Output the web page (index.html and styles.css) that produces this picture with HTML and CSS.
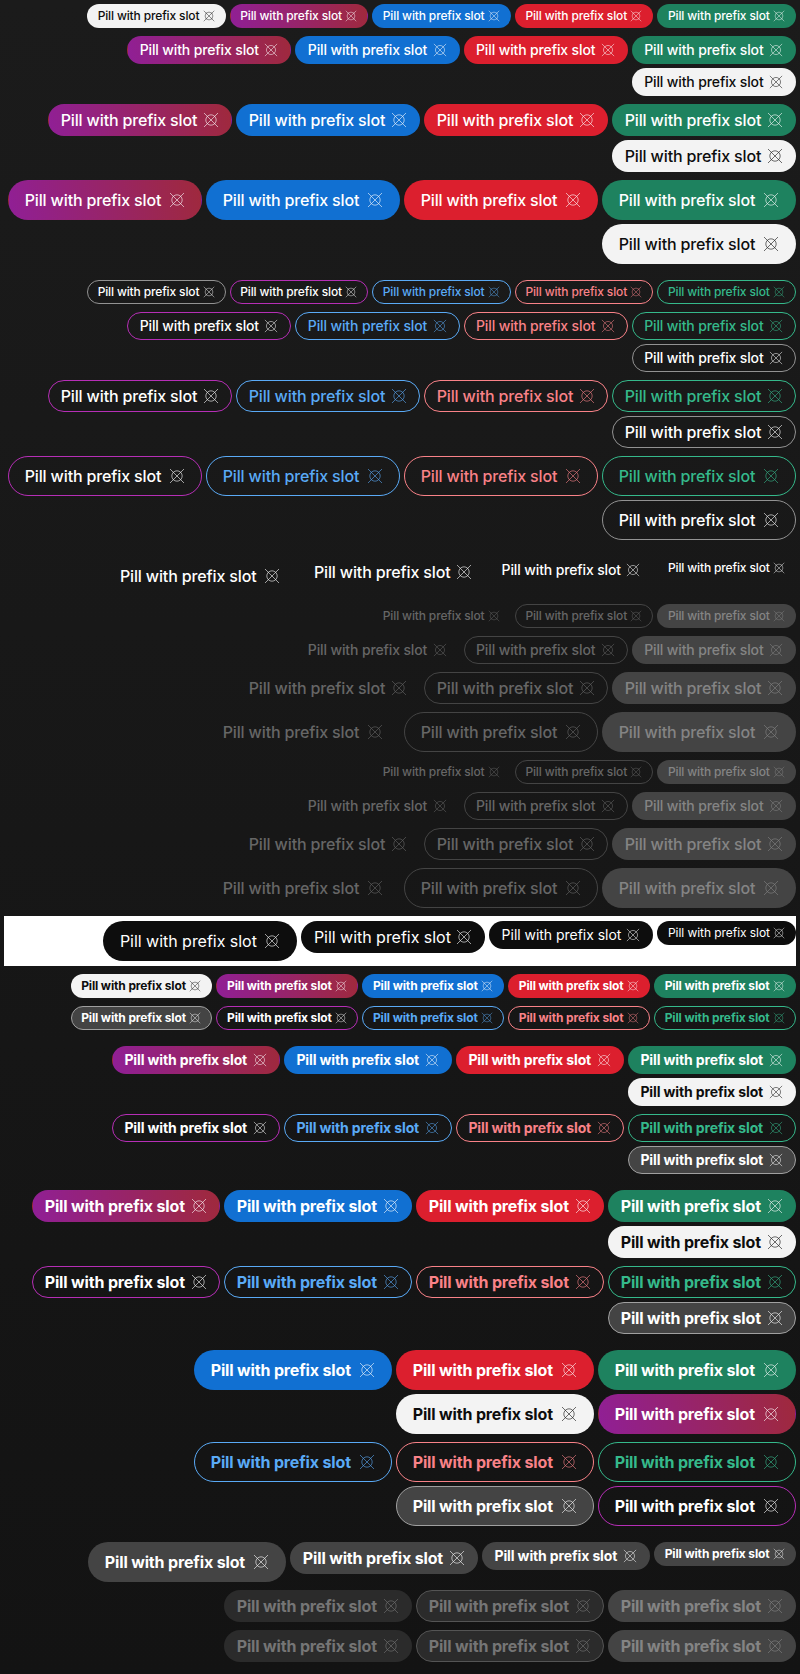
FILE: index.html
```html
<!DOCTYPE html>
<html lang="en">
<head>
<meta charset="utf-8">
<title>Pills</title>
<link rel="stylesheet" href="styles.css">
</head>
<body>
<svg class="defs" aria-hidden="true">
  <symbol id="slot-icon" viewBox="0 0 16 16">
    <circle cx="8" cy="8" r="5.2"/>
    <path d="M1 1 15 15M15 1 1 15"/>
  </symbol>
</svg>
<main class="board" id="board" dir="rtl"></main>
<script src="script.js"></script>
</body>
</html>
```

FILE: styles.css
```css
body {
  margin: 0;
  background: #131313;
  font-family: Inter, "Liberation Sans", sans-serif;
}

.defs {
  position: absolute;
  width: 0;
  height: 0;
}

.board {
  box-sizing: border-box;
  height: 1674px;
  background: linear-gradient(#1b1b1b, #131313);
}

.row {
  display: flex;
  flex-wrap: wrap;
  align-items: flex-start;
  gap: 4px;
  padding: 4px;
}

.row.spaced {
  padding-top: 12px;
}

.sheet {
  display: flex;
  flex: 1;
  align-items: flex-start;
  gap: 4px;
  padding: 5px 0;
  background: #fff;
}

.pill {
  direction: ltr;
  display: flex;
  align-items: center;
  justify-content: space-between;
  box-sizing: border-box;
  border: 1px solid transparent;
  border-radius: 20px;
  white-space: nowrap;
  font-weight: 500;
  color: #fff;
}

.icon {
  flex: none;
  width: 16px;
  height: 16px;
  fill: none;
  stroke: currentColor;
  stroke-width: 0.6px;
}

.s24 { width: 138.6px; height: 24px; padding: 0 10px 0 9.6px; font-size: 12px; letter-spacing: -0.14px; }
.s28 { width: 164.2px; height: 28px; padding: 0 12px 0 11.4px; font-size: 14px; letter-spacing: -0.13px; }
.s32 { width: 184px; height: 32px; padding: 0 12px 0 11.7px; font-size: 16px; letter-spacing: -0.14px; }
.s40 { width: 194px; height: 40px; padding: 0 16px 0 15.7px; font-size: 16px; letter-spacing: -0.14px; }
.s24 .icon { width: 12px; height: 12px; }
.s28 .icon { width: 14px; height: 14px; }
.s24 span, .s28 span { padding-bottom: 1px; }

.bold { font-weight: 700; letter-spacing: -0.15px; }
.bold.s24 { width: 141.9px; letter-spacing: -0.13px; }
.bold.s28 { width: 168px; letter-spacing: -0.13px; }
.bold.s32 { width: 188px; }
.bold.s40 { width: 198px; }

.green { background: #1e825f; }
.red { background: #dc1f2e; }
.blue { background: #1170d2; }
.white { background: #f3f3f3; color: #0d0d0d; }
.cta { background: linear-gradient(75deg, #901f96, #9f293c); }

.o-green { border-color: #35b98b; color: #35b98b; }
.o-red { border-color: #f98288; color: #f98288; }
.o-blue { border-color: #5aaaf6; color: #5aaaf6; }
.o-gray { border-color: #929292; }
.o-cta { border-color: #b62eb6; }
.bold.o-gray { background: #444; border-color: #a0a0a0; }

.black { background: #0d0d0d; font-weight: 400; letter-spacing: -0.03px; }
.black.s24 { letter-spacing: -0.06px; }
.soft { background: #444; }

.d-fill { background: #444; color: #848484; }
.d-line { border-color: #444; color: #666; }
.d-ghost { color: #666; }
.bold.d-line { background: #2b2b2b; border-color: #545454; color: #757575; }
.bold.d-ghost { background: #2b2b2b; color: #757575; }
```

FILE: script.js
```js
const FILLED = ['green', 'red', 'blue', 'cta', 'white'];
const OUTLINED = ['o-green', 'o-red', 'o-blue', 'o-cta', 'o-gray'];
const DISABLED = ['d-fill', 'd-line', 'd-ghost'];
const SIZES = ['s24', 's28', 's32', 's40'];

const board = document.getElementById('board');

const pill = (...classes) =>
  `<div class="pill ${classes.join(' ')}"><span>Pill with prefix slot</span>` +
  '<svg class="icon"><use href="#slot-icon"/></svg></div>';

function addRow(pills, spaced, sheet) {
  const row = document.createElement('div');
  row.className = spaced ? 'row spaced' : 'row';
  row.innerHTML = sheet ? `<div class="sheet">${pills.join('')}</div>` : pills.join('');
  board.append(row);
}

SIZES.forEach(s => addRow(FILLED.map(c => pill(s, c))));
SIZES.forEach((s, i) => addRow(OUTLINED.map(c => pill(s, c)), i === 0));
addRow(SIZES.map(s => pill(s)), true);
for (let i = 0; i < 2; i++) SIZES.forEach(s => addRow(DISABLED.map(c => pill(s, c))));
addRow(SIZES.map(s => pill(s, 'black')), false, true);

SIZES.forEach((s, i) => {
  addRow(FILLED.map(c => pill(s, 'bold', c)), i > 0);
  addRow(OUTLINED.map(c => pill(s, 'bold', c)));
});
addRow(SIZES.map(s => pill(s, 'bold', 'soft')), true);
for (let i = 0; i < 2; i++) addRow(DISABLED.map(c => pill('s32', 'bold', c)));
```
